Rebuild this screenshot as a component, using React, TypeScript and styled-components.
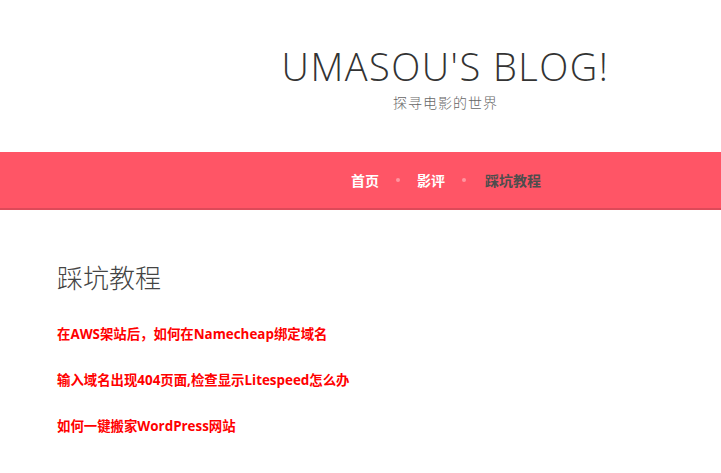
import React from "react";
import styled, { createGlobalStyle } from "styled-components";

const Global = createGlobalStyle`
  html, body { margin: 0; padding: 0; background: #fff; }
  body { font-family: "Open Sans", "Noto Sans CJK SC", sans-serif; }
`;

const Header = styled.header`
  height: 152px;
  display: flex;
  flex-direction: column;
  align-items: center;
  padding-left: 170px;
  box-sizing: border-box;
  padding-top: 40px;
`;

const SiteTitle = styled.h1`
  margin: 0;
  font-family: "Open Sans", sans-serif;
  font-weight: 300;
  font-size: 38px;
  line-height: 52px;
  letter-spacing: 1.5px;
  color: #333;
`;

const Tagline = styled.p`
  margin: 0;
  font-family: "Noto Sans CJK SC", sans-serif;
  font-weight: 300;
  font-size: 14px;
  letter-spacing: 1px;
  color: #666;
  line-height: 20px;
`;

const Nav = styled.nav`
  height: 56px;
  background: #ff5566;
  border-bottom: 2px solid #dd4a59;
  display: flex;
  align-items: center;
  padding-left: 351px;
`;

const NavItem = styled.a<{ $active?: boolean }>`
  font-family: "Noto Sans CJK SC", sans-serif;
  font-weight: 700;
  font-size: 14px;
  color: ${(p) => (p.$active ? "#4d4d4d" : "#fff")};
  text-decoration: none;
  margin-left: ${(p) => (p.$active ? "2px" : "0")};
`;

const Dot = styled.span`
  width: 4px;
  height: 4px;
  border-radius: 50%;
  background: #ff95a0;
  margin: 0 17px;
`;

const Main = styled.main`
  padding: 48px 57px 0;
`;

const PageTitle = styled.h2`
  margin: 0 0 28px;
  font-family: "Noto Sans CJK SC", sans-serif;
  font-weight: 300;
  font-size: 26px;
  line-height: 38px;
  color: #444;
`;

const PostList = styled.div`
  display: flex;
  flex-direction: column;
  gap: 26px;
`;

const PostLink = styled.a`
  font-family: "Open Sans", "Noto Sans CJK SC", sans-serif;
  font-weight: 700;
  font-size: 13.4px;
  line-height: 20px;
  color: #ff0000;
  text-decoration: none;
`;

export default function App() {
  return (
    <>
      <Global />
      <Header>
        <SiteTitle>UMASOU'S BLOG!</SiteTitle>
        <Tagline>探寻电影的世界</Tagline>
      </Header>
      <Nav>
        <NavItem href="#">首页</NavItem>
        <Dot />
        <NavItem href="#">影评</NavItem>
        <Dot />
        <NavItem href="#" $active>踩坑教程</NavItem>
      </Nav>
      <Main>
        <PageTitle>踩坑教程</PageTitle>
        <PostList>
          <PostLink href="#">在AWS架站后，如何在Namecheap绑定域名</PostLink>
          <PostLink href="#">输入域名出现404页面,检查显示Litespeed怎么办</PostLink>
          <PostLink href="#">如何一键搬家WordPress网站</PostLink>
        </PostList>
      </Main>
    </>
  );
}
